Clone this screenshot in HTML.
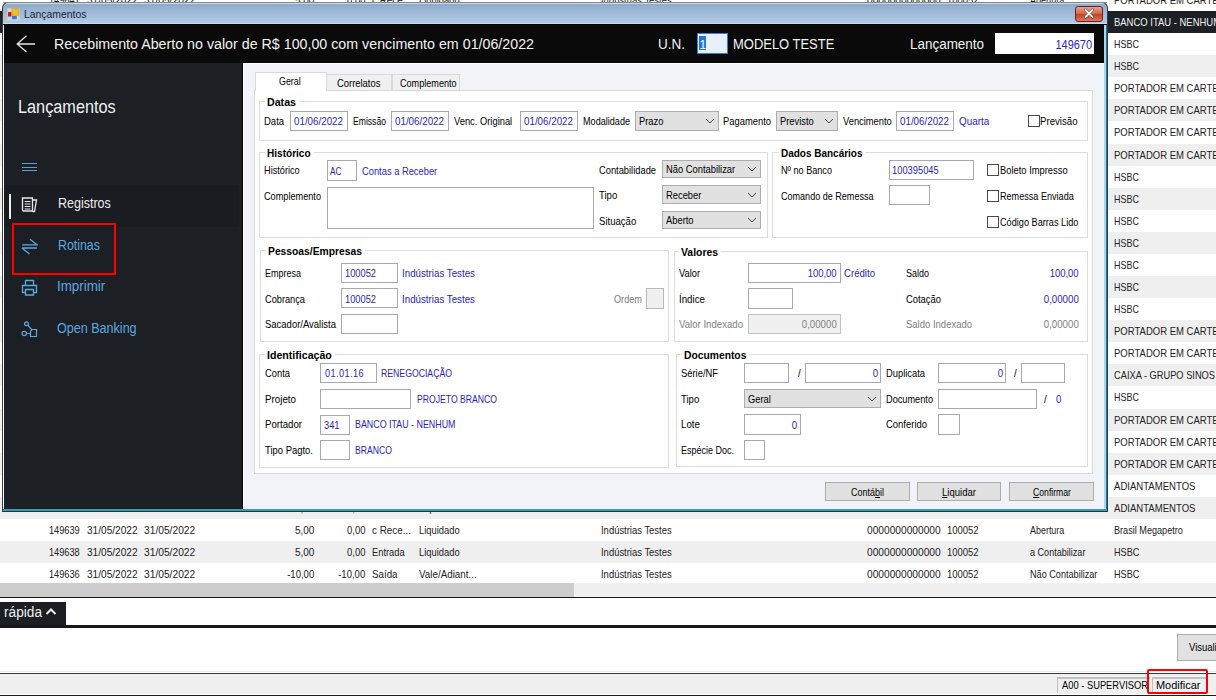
<!DOCTYPE html>
<html><head><meta charset="utf-8">
<style>
*{box-sizing:border-box}
body{margin:0;width:1216px;height:700px;position:relative;overflow:hidden;background:#fff;font-family:"Liberation Sans",sans-serif;font-size:11px;color:#000}
.a{position:absolute}
.t{position:absolute;white-space:nowrap}
u{text-decoration:underline}
</style></head><body>
<div class="a" style="left:0px;top:0px;width:1216px;height:700px;background:#fff;"></div>
<div class="a" style="left:0px;top:11px;width:1216px;height:22px;background:#1d2024;"></div>
<div class="a" style="left:0px;top:55px;width:1216px;height:22px;background:#efefef;"></div>
<div class="a" style="left:0px;top:99px;width:1216px;height:22px;background:#efefef;"></div>
<div class="a" style="left:0px;top:144px;width:1216px;height:22px;background:#efefef;"></div>
<div class="a" style="left:0px;top:188px;width:1216px;height:22px;background:#efefef;"></div>
<div class="a" style="left:0px;top:232px;width:1216px;height:22px;background:#efefef;"></div>
<div class="a" style="left:0px;top:276px;width:1216px;height:22px;background:#efefef;"></div>
<div class="a" style="left:0px;top:320px;width:1216px;height:22px;background:#efefef;"></div>
<div class="a" style="left:0px;top:364px;width:1216px;height:22px;background:#efefef;"></div>
<div class="a" style="left:0px;top:409px;width:1216px;height:22px;background:#efefef;"></div>
<div class="a" style="left:0px;top:453px;width:1216px;height:22px;background:#efefef;"></div>
<div class="a" style="left:0px;top:497px;width:1216px;height:22px;background:#efefef;"></div>
<div class="a" style="left:0px;top:541px;width:1216px;height:22px;background:#efefef;"></div>
<div class="t" style="transform:scaleX(0.865);top:-5.30px;font-size:11px;line-height:11px;color:#222;left:1113.8px;transform-origin:left center;">PORTADOR EM CARTEIRA</div>
<div class="t" style="transform:scaleX(0.86);top:16.70px;font-size:11px;line-height:11px;color:#f4f4f4;left:1113.8px;transform-origin:left center;">BANCO ITAU - NENHUM</div>
<div class="t" style="transform:scaleX(0.815);top:38.70px;font-size:11px;line-height:11px;color:#222;left:1113.8px;transform-origin:left center;">HSBC</div>
<div class="t" style="transform:scaleX(0.815);top:60.70px;font-size:11px;line-height:11px;color:#222;left:1113.8px;transform-origin:left center;">HSBC</div>
<div class="t" style="transform:scaleX(0.865);top:82.70px;font-size:11px;line-height:11px;color:#222;left:1113.8px;transform-origin:left center;">PORTADOR EM CARTEIRA</div>
<div class="t" style="transform:scaleX(0.865);top:104.70px;font-size:11px;line-height:11px;color:#222;left:1113.8px;transform-origin:left center;">PORTADOR EM CARTEIRA</div>
<div class="t" style="transform:scaleX(0.865);top:126.70px;font-size:11px;line-height:11px;color:#222;left:1113.8px;transform-origin:left center;">PORTADOR EM CARTEIRA</div>
<div class="t" style="transform:scaleX(0.865);top:149.70px;font-size:11px;line-height:11px;color:#222;left:1113.8px;transform-origin:left center;">PORTADOR EM CARTEIRA</div>
<div class="t" style="transform:scaleX(0.815);top:171.70px;font-size:11px;line-height:11px;color:#222;left:1113.8px;transform-origin:left center;">HSBC</div>
<div class="t" style="transform:scaleX(0.815);top:193.70px;font-size:11px;line-height:11px;color:#222;left:1113.8px;transform-origin:left center;">HSBC</div>
<div class="t" style="transform:scaleX(0.815);top:215.70px;font-size:11px;line-height:11px;color:#222;left:1113.8px;transform-origin:left center;">HSBC</div>
<div class="t" style="transform:scaleX(0.815);top:237.70px;font-size:11px;line-height:11px;color:#222;left:1113.8px;transform-origin:left center;">HSBC</div>
<div class="t" style="transform:scaleX(0.815);top:259.70px;font-size:11px;line-height:11px;color:#222;left:1113.8px;transform-origin:left center;">HSBC</div>
<div class="t" style="transform:scaleX(0.815);top:281.70px;font-size:11px;line-height:11px;color:#222;left:1113.8px;transform-origin:left center;">HSBC</div>
<div class="t" style="transform:scaleX(0.815);top:303.70px;font-size:11px;line-height:11px;color:#222;left:1113.8px;transform-origin:left center;">HSBC</div>
<div class="t" style="transform:scaleX(0.865);top:325.70px;font-size:11px;line-height:11px;color:#222;left:1113.8px;transform-origin:left center;">PORTADOR EM CARTEIRA</div>
<div class="t" style="transform:scaleX(0.865);top:347.70px;font-size:11px;line-height:11px;color:#222;left:1113.8px;transform-origin:left center;">PORTADOR EM CARTEIRA</div>
<div class="t" style="transform:scaleX(0.843);top:369.70px;font-size:11px;line-height:11px;color:#222;left:1113.8px;transform-origin:left center;">CAIXA - GRUPO SINOS</div>
<div class="t" style="transform:scaleX(0.815);top:391.70px;font-size:11px;line-height:11px;color:#222;left:1113.8px;transform-origin:left center;">HSBC</div>
<div class="t" style="transform:scaleX(0.865);top:414.70px;font-size:11px;line-height:11px;color:#222;left:1113.8px;transform-origin:left center;">PORTADOR EM CARTEIRA</div>
<div class="t" style="transform:scaleX(0.865);top:436.70px;font-size:11px;line-height:11px;color:#222;left:1113.8px;transform-origin:left center;">PORTADOR EM CARTEIRA</div>
<div class="t" style="transform:scaleX(0.865);top:458.70px;font-size:11px;line-height:11px;color:#222;left:1113.8px;transform-origin:left center;">PORTADOR EM CARTEIRA</div>
<div class="t" style="transform:scaleX(0.869);top:480.70px;font-size:11px;line-height:11px;color:#222;left:1113.8px;transform-origin:left center;">ADIANTAMENTOS</div>
<div class="t" style="transform:scaleX(0.869);top:502.70px;font-size:11px;line-height:11px;color:#222;left:1113.8px;transform-origin:left center;">ADIANTAMENTOS</div>
<div class="t" style="transform:scaleX(0.8388);top:524.90px;font-size:11px;line-height:11px;color:#222;right:1136px;transform-origin:right center;">149639</div>
<div class="t" style="transform:scaleX(0.9190);top:524.90px;font-size:11px;line-height:11px;color:#222;left:86.5px;transform-origin:left center;">31/05/2022</div>
<div class="t" style="transform:scaleX(0.9299);top:524.90px;font-size:11px;line-height:11px;color:#222;left:143.6px;transform-origin:left center;">31/05/2022</div>
<div class="t" style="transform:scaleX(0.9056);top:524.90px;font-size:11px;line-height:11px;color:#222;right:901.7px;transform-origin:right center;">5,00</div>
<div class="t" style="transform:scaleX(0.8589);top:524.90px;font-size:11px;line-height:11px;color:#222;right:850.4px;transform-origin:right center;">0,00</div>
<div class="t" style="transform:scaleX(0.8962);top:524.90px;font-size:11px;line-height:11px;color:#222;left:371.8px;transform-origin:left center;">c Rece...</div>
<div class="t" style="transform:scaleX(0.8529);top:524.90px;font-size:11px;line-height:11px;color:#222;left:418.5px;transform-origin:left center;">Liquidado</div>
<div class="t" style="transform:scaleX(0.8586);top:524.90px;font-size:11px;line-height:11px;color:#222;left:600.6px;transform-origin:left center;">Indústrias Testes</div>
<div class="t" style="transform:scaleX(0.9267);top:524.90px;font-size:11px;line-height:11px;color:#222;left:866.6px;transform-origin:left center;">0000000000000</div>
<div class="t" style="transform:scaleX(0.8606);top:524.90px;font-size:11px;line-height:11px;color:#222;left:947.2px;transform-origin:left center;">100052</div>
<div class="t" style="transform:scaleX(0.8127);top:524.90px;font-size:11px;line-height:11px;color:#222;left:1030px;transform-origin:left center;">Abertura</div>
<div class="t" style="transform:scaleX(0.8286);top:524.90px;font-size:11px;line-height:11px;color:#222;left:1113.7px;transform-origin:left center;">Brasil Megapetro</div>
<div class="t" style="transform:scaleX(0.8388);top:546.90px;font-size:11px;line-height:11px;color:#222;right:1136px;transform-origin:right center;">149638</div>
<div class="t" style="transform:scaleX(0.9190);top:546.90px;font-size:11px;line-height:11px;color:#222;left:86.5px;transform-origin:left center;">31/05/2022</div>
<div class="t" style="transform:scaleX(0.9299);top:546.90px;font-size:11px;line-height:11px;color:#222;left:143.6px;transform-origin:left center;">31/05/2022</div>
<div class="t" style="transform:scaleX(0.9056);top:546.90px;font-size:11px;line-height:11px;color:#222;right:901.7px;transform-origin:right center;">5,00</div>
<div class="t" style="transform:scaleX(0.8589);top:546.90px;font-size:11px;line-height:11px;color:#222;right:850.4px;transform-origin:right center;">0,00</div>
<div class="t" style="transform:scaleX(0.8461);top:546.90px;font-size:11px;line-height:11px;color:#222;left:371.8px;transform-origin:left center;">Entrada</div>
<div class="t" style="transform:scaleX(0.8529);top:546.90px;font-size:11px;line-height:11px;color:#222;left:418.5px;transform-origin:left center;">Liquidado</div>
<div class="t" style="transform:scaleX(0.8586);top:546.90px;font-size:11px;line-height:11px;color:#222;left:600.6px;transform-origin:left center;">Indústrias Testes</div>
<div class="t" style="transform:scaleX(0.9267);top:546.90px;font-size:11px;line-height:11px;color:#222;left:866.6px;transform-origin:left center;">0000000000000</div>
<div class="t" style="transform:scaleX(0.8606);top:546.90px;font-size:11px;line-height:11px;color:#222;left:947.2px;transform-origin:left center;">100052</div>
<div class="t" style="transform:scaleX(0.8236);top:546.90px;font-size:11px;line-height:11px;color:#222;left:1030px;transform-origin:left center;">a Contabilizar</div>
<div class="t" style="transform:scaleX(0.8278);top:546.90px;font-size:11px;line-height:11px;color:#222;left:1113.7px;transform-origin:left center;">HSBC</div>
<div class="t" style="transform:scaleX(0.8388);top:568.90px;font-size:11px;line-height:11px;color:#222;right:1136px;transform-origin:right center;">149636</div>
<div class="t" style="transform:scaleX(0.9190);top:568.90px;font-size:11px;line-height:11px;color:#222;left:86.5px;transform-origin:left center;">31/05/2022</div>
<div class="t" style="transform:scaleX(0.9299);top:568.90px;font-size:11px;line-height:11px;color:#222;left:143.6px;transform-origin:left center;">31/05/2022</div>
<div class="t" style="transform:scaleX(0.8653);top:568.90px;font-size:11px;line-height:11px;color:#222;right:901.7px;transform-origin:right center;">-10,00</div>
<div class="t" style="transform:scaleX(0.8653);top:568.90px;font-size:11px;line-height:11px;color:#222;right:850.4px;transform-origin:right center;">-10,00</div>
<div class="t" style="transform:scaleX(0.8870);top:568.90px;font-size:11px;line-height:11px;color:#222;left:371.8px;transform-origin:left center;">Saída</div>
<div class="t" style="transform:scaleX(0.8928);top:568.90px;font-size:11px;line-height:11px;color:#222;left:418.5px;transform-origin:left center;">Vale/Adiant...</div>
<div class="t" style="transform:scaleX(0.8586);top:568.90px;font-size:11px;line-height:11px;color:#222;left:600.6px;transform-origin:left center;">Indústrias Testes</div>
<div class="t" style="transform:scaleX(0.9267);top:568.90px;font-size:11px;line-height:11px;color:#222;left:866.6px;transform-origin:left center;">0000000000000</div>
<div class="t" style="transform:scaleX(0.8606);top:568.90px;font-size:11px;line-height:11px;color:#222;left:947.2px;transform-origin:left center;">100052</div>
<div class="t" style="transform:scaleX(0.8287);top:568.90px;font-size:11px;line-height:11px;color:#222;left:1030px;transform-origin:left center;">Não Contabilizar</div>
<div class="t" style="transform:scaleX(0.8278);top:568.90px;font-size:11px;line-height:11px;color:#222;left:1113.7px;transform-origin:left center;">HSBC</div>
<div class="t" style="transform:scaleX(0.8388);top:502.90px;font-size:11px;line-height:11px;color:#222;right:1136px;transform-origin:right center;">149640</div>
<div class="t" style="transform:scaleX(0.9190);top:502.90px;font-size:11px;line-height:11px;color:#222;left:86.5px;transform-origin:left center;">31/05/2022</div>
<div class="t" style="transform:scaleX(0.9299);top:502.90px;font-size:11px;line-height:11px;color:#222;left:143.6px;transform-origin:left center;">31/05/2022</div>
<div class="t" style="transform:scaleX(0.9056);top:502.90px;font-size:11px;line-height:11px;color:#222;right:901.7px;transform-origin:right center;">5,00</div>
<div class="t" style="transform:scaleX(0.8589);top:502.90px;font-size:11px;line-height:11px;color:#222;right:850.4px;transform-origin:right center;">0,00</div>
<div class="t" style="transform:scaleX(0.8962);top:502.90px;font-size:11px;line-height:11px;color:#222;left:371.8px;transform-origin:left center;">c Rece...</div>
<div class="t" style="transform:scaleX(0.8529);top:502.90px;font-size:11px;line-height:11px;color:#222;left:418.5px;transform-origin:left center;">Liquidado</div>
<div class="t" style="transform:scaleX(0.8586);top:502.90px;font-size:11px;line-height:11px;color:#222;left:600.6px;transform-origin:left center;">Indústrias Testes</div>
<div class="t" style="transform:scaleX(0.9267);top:502.90px;font-size:11px;line-height:11px;color:#222;left:866.6px;transform-origin:left center;">0000000000000</div>
<div class="t" style="transform:scaleX(0.8606);top:502.90px;font-size:11px;line-height:11px;color:#222;left:947.2px;transform-origin:left center;">100052</div>
<div class="t" style="transform:scaleX(0.8127);top:502.90px;font-size:11px;line-height:11px;color:#222;left:1030px;transform-origin:left center;">Abertura</div>
<div class="t" style="transform:scaleX(0.8388);top:-5.10px;font-size:11px;line-height:11px;color:#222;right:1136px;transform-origin:right center;">149641</div>
<div class="t" style="transform:scaleX(0.9190);top:-5.10px;font-size:11px;line-height:11px;color:#222;left:86.5px;transform-origin:left center;">31/05/2022</div>
<div class="t" style="transform:scaleX(0.9299);top:-5.10px;font-size:11px;line-height:11px;color:#222;left:143.6px;transform-origin:left center;">31/05/2022</div>
<div class="t" style="transform:scaleX(0.9056);top:-5.10px;font-size:11px;line-height:11px;color:#222;right:901.7px;transform-origin:right center;">5,00</div>
<div class="t" style="transform:scaleX(0.8589);top:-5.10px;font-size:11px;line-height:11px;color:#222;right:850.4px;transform-origin:right center;">0,00</div>
<div class="t" style="transform:scaleX(0.8962);top:-5.10px;font-size:11px;line-height:11px;color:#222;left:371.8px;transform-origin:left center;">c Rece...</div>
<div class="t" style="transform:scaleX(0.8529);top:-5.10px;font-size:11px;line-height:11px;color:#222;left:418.5px;transform-origin:left center;">Liquidado</div>
<div class="t" style="transform:scaleX(0.8586);top:-5.10px;font-size:11px;line-height:11px;color:#222;left:600.6px;transform-origin:left center;">Indústrias Testes</div>
<div class="t" style="transform:scaleX(0.9267);top:-5.10px;font-size:11px;line-height:11px;color:#222;left:866.6px;transform-origin:left center;">0000000000000</div>
<div class="t" style="transform:scaleX(0.8606);top:-5.10px;font-size:11px;line-height:11px;color:#222;left:947.2px;transform-origin:left center;">100052</div>
<div class="t" style="transform:scaleX(0.8127);top:-5.10px;font-size:11px;line-height:11px;color:#222;left:1030px;transform-origin:left center;">Abertura</div>
<div class="a" style="left:0px;top:583px;width:1216px;height:14px;background:#f0f0f0;"></div>
<div class="a" style="left:0px;top:583px;width:574px;height:14px;background:#cdcdcd;"></div>
<div class="a" style="left:0px;top:597px;width:1216px;height:1px;background:#1a1a1a;"></div>
<div class="a" style="left:0px;top:598px;width:1216px;height:28px;background:#fff;"></div>
<div class="a" style="left:0px;top:602px;width:66px;height:24px;background:#1b1e22;"></div>
<div class="t" style="transform:scaleX(0.9763);top:604.70px;font-size:14px;line-height:14px;color:#f0f0f0;left:4px;transform-origin:left center;">rápida</div>
<svg class="a" style="left:45px;top:607px" width="12" height="9" viewBox="0 0 12 9"><path d="M1.5 7 L6 2.5 L10.5 7" stroke="#f0f0f0" stroke-width="2" fill="none"/></svg>
<div class="a" style="left:0px;top:625px;width:1216px;height:3px;background:#15171a;"></div>
<div class="a" style="left:0px;top:628px;width:1216px;height:43px;background:#fff;"></div>
<div class="a" style="left:1177px;top:634px;width:53px;height:27px;background:#e1e1e1;border:1px solid #adadad;"></div>
<div class="t" style="top:642.00px;font-size:11px;line-height:11px;color:#000;transform:scaleX(0.86);left:1189px;transform-origin:left center;">Visualizar</div>
<div class="a" style="left:0px;top:671px;width:1216px;height:1px;background:#e0ecf8;"></div>
<div class="a" style="left:0px;top:673px;width:1216px;height:1px;background:#3a3a3a;"></div>
<div class="a" style="left:0px;top:674px;width:1216px;height:20px;background:#f0f0f0;"></div>
<div class="a" style="left:0px;top:694px;width:1216px;height:1px;background:#fff;"></div>
<div class="a" style="left:0px;top:695px;width:1216px;height:1px;background:#1e1e1e;"></div>
<div class="a" style="left:0px;top:696px;width:1216px;height:4px;background:#fff;"></div>
<div class="a" style="left:1057px;top:677px;width:93px;height:16px;border:1px solid #c0c0c0;border-right:none;border-bottom:none;border-width:2px 0 0 1px;"></div>
<div class="t" style="transform:scaleX(0.8491);top:680.00px;font-size:11px;line-height:11px;color:#000;left:1061.5px;transform-origin:left center;">A00 - SUPERVISOR</div>
<div class="a" style="left:1152px;top:677px;width:54px;height:16px;border:1px solid #c0c0c0;border-bottom:none;border-width:2px 0 0 1px;"></div>
<div class="t" style="transform:scaleX(0.9950);top:680.00px;font-size:11px;line-height:11px;color:#000;left:1155.6px;transform-origin:left center;">Modificar</div>
<div class="a" style="left:1147px;top:669px;width:61px;height:25px;border:2.5px solid #f00;border-radius:2px;"></div>
<div class="a" style="left:2px;top:2px;width:1106px;height:510px;background:#3a3a3a;border-radius:6px 6px 0 0"></div>
<div class="a" style="left:3px;top:2px;width:1104px;height:1px;background:#8a8480;border-radius:5px 5px 0 0"></div>
<div class="a" style="left:3px;top:3px;width:1104px;height:508px;background:linear-gradient(#c8dcf0 0px,#c8dcf0 1px,#8eaacb 1px,#b2cce6 20px,#c4dcf4 20px,#c4dcf4 21px,#000 21px);border-radius:5px 5px 0 0"></div>
<div class="a" style="left:3px;top:25px;width:1px;height:484px;background:#f4f8fc;"></div>
<div class="a" style="left:1104px;top:25px;width:2px;height:484px;background:#a8d8f0;"></div>
<div class="a" style="left:1106px;top:25px;width:1px;height:484px;background:#1a7a90;"></div>
<svg class="a" style="left:7px;top:8px" width="13" height="13" viewBox="0 0 13 13"><rect x="0.5" y="0.5" width="12" height="12" fill="#c8d8ea" stroke="#d8c8b0" stroke-width="0.6"/><rect x="1" y="4" width="3.5" height="4.5" fill="#c8201a"/><rect x="5" y="0.8" width="6.8" height="6.4" fill="#f0c020" stroke="#c89810" stroke-width="0.6"/><rect x="5" y="8" width="4.8" height="3.2" fill="#3a7ad8"/></svg>
<div class="t" style="transform:scaleX(0.9463);top:9.40px;font-size:11px;line-height:11px;color:#1e1e3a;left:24px;transform-origin:left center;">Lançamentos</div>
<div class="a" style="left:1075px;top:6px;width:28px;height:16px;border:1px solid #5a2a2a;border-radius:3px;background:linear-gradient(#e8a090,#d86a50 45%,#c8401e 55%,#e07860)"></div>
<svg class="a" style="left:1083px;top:8px" width="12" height="11" viewBox="0 0 12 11"><path d="M2.5 2 L9.5 9 M9.5 2 L2.5 9" stroke="#6a3a3a" stroke-width="3" stroke-linecap="round"/><path d="M2.5 2 L9.5 9 M9.5 2 L2.5 9" stroke="#fff" stroke-width="1.8" stroke-linecap="round"/></svg>
<div class="a" style="left:4px;top:24px;width:1100px;height:1px;background:#000;"></div>
<div class="a" style="left:4px;top:25px;width:1100px;height:38px;background:#0a0a0a;"></div>
<svg class="a" style="left:15px;top:34px" width="24" height="20" viewBox="0 0 24 20"><path d="M2.2 10 L20 10 M11.5 1.8 L2.2 10 L11.5 18" stroke="#e6e6e6" stroke-width="1.3" fill="none"/></svg>
<div class="t" style="transform:scaleX(0.9193);top:36.20px;font-size:15.5px;line-height:15.5px;color:#f2f2f2;left:54px;transform-origin:left center;">Recebimento Aberto no valor de R$ 100,00 com vencimento em 01/06/2022</div>
<div class="t" style="transform:scaleX(0.8710);top:36.20px;font-size:15.5px;line-height:15.5px;color:#f2f2f2;left:658px;transform-origin:left center;">U.N.</div>
<div class="a" style="left:697px;top:33px;width:31px;height:21px;background:#e8f1fb;border:1px solid #3d7bd0;"></div>
<div class="a" style="left:699px;top:36px;width:6.5px;height:14px;background:#1a78e0;"></div>
<div class="t" style="top:38.50px;font-size:12px;line-height:12px;color:#fff;left:699.5px;transform-origin:left center;">1</div>
<div class="t" style="transform:scaleX(0.8361);top:36.20px;font-size:15.5px;line-height:15.5px;color:#f2f2f2;left:733.2px;transform-origin:left center;">MODELO TESTE</div>
<div class="t" style="transform:scaleX(0.8674);top:36.20px;font-size:15.5px;line-height:15.5px;color:#f2f2f2;left:909.5px;transform-origin:left center;">Lançamento</div>
<div class="a" style="left:995px;top:33px;width:99px;height:21px;background:#fff;"></div>
<div class="t" style="transform:scaleX(0.9139);top:38.50px;font-size:12px;line-height:12px;color:#2a24c8;right:123.5px;transform-origin:right center;">149670</div>
<div class="a" style="left:4px;top:63px;width:239px;height:446px;background:#1c1f23;"></div>
<div class="a" style="left:242px;top:63px;width:1px;height:446px;background:#050505;"></div>
<div class="t" style="transform:scaleX(0.9040);top:98.10px;font-size:18px;line-height:18px;color:#f0f0f0;left:18.3px;transform-origin:left center;">Lançamentos</div>
<div class="a" style="left:22px;top:163px;width:15px;height:1.1999999999999886px;background:#5c9fd6;"></div>
<div class="a" style="left:22px;top:166.5px;width:15px;height:1.1999999999999886px;background:#5c9fd6;"></div>
<div class="a" style="left:22px;top:170px;width:15px;height:1.1999999999999886px;background:#5c9fd6;"></div>
<div class="a" style="left:4px;top:185px;width:235px;height:42px;background:#191c20;"></div>
<div class="a" style="left:9px;top:194px;width:1.5px;height:24.5px;background:#f0f0f0;"></div>
<svg class="a" style="left:21px;top:196px" width="17" height="17" viewBox="0 0 17 17"><path d="M1.5 2 H11.5 V15 H2.5 Q1.5 15 1.5 14 Z" stroke="#e8e8e8" stroke-width="1.3" fill="none"/><path d="M11.5 4 H15.5 L13.5 15.5 H11.5" stroke="#e8e8e8" stroke-width="1.3" fill="none"/><path d="M3.7 5.5 H9.5 M3.7 8 H9.5 M3.7 10.5 H9.5 M3.7 13 H9.5" stroke="#e8e8e8" stroke-width="1.1"/></svg>
<div class="t" style="transform:scaleX(0.8928);top:195.90px;font-size:14px;line-height:14px;color:#ececec;left:57.6px;transform-origin:left center;">Registros</div>
<svg class="a" style="left:21px;top:237px" width="17" height="18" viewBox="0 0 17 18"><path d="M1.2 7.8 H16 L9 2.2 M1 11 H16 M1 11 L8.5 17" stroke="#5ea8e0" stroke-width="1.3" fill="none" stroke-linejoin="miter"/></svg>
<div class="t" style="transform:scaleX(0.8806);top:238.00px;font-size:14px;line-height:14px;color:#5ea8e0;left:57.6px;transform-origin:left center;">Rotinas</div>
<svg class="a" style="left:21px;top:279px" width="17" height="18" viewBox="0 0 17 18"><path d="M4.5 6 V1.5 H12.5 V6 M4 13.5 H1.5 V6.5 H15.5 V13.5 H13 M4.5 10.5 H12.5 V16 H4.5 Z" stroke="#5ea8e0" stroke-width="1.3" fill="none"/></svg>
<div class="t" style="transform:scaleX(0.9555);top:278.90px;font-size:14px;line-height:14px;color:#5ea8e0;left:57.3px;transform-origin:left center;">Imprimir</div>
<svg class="a" style="left:21px;top:321px" width="17" height="17" viewBox="0 0 17 17"><circle cx="5.5" cy="2.8" r="1.9" stroke="#5ea8e0" stroke-width="1.2" fill="none"/><circle cx="3.2" cy="12.5" r="2.2" stroke="#5ea8e0" stroke-width="1.2" fill="none"/><path d="M6.8 4.2 L11 9 M5.4 12.5 H9.5 M9.5 15.5 V10.5 L11 8.5 H15.5 V15.5 Z" stroke="#5ea8e0" stroke-width="1.2" fill="none"/></svg>
<div class="t" style="transform:scaleX(0.8971);top:320.80px;font-size:14px;line-height:14px;color:#5ea8e0;left:57.3px;transform-origin:left center;">Open Banking</div>
<div class="a" style="left:12px;top:223px;width:104px;height:52px;border:2px solid #f00;"></div>
<div class="a" style="left:243px;top:63px;width:861px;height:446px;background:#f2f3f9;"></div>
<div class="a" style="left:243px;top:63px;width:861px;height:1px;background:#fff;"></div>
<div class="a" style="left:243px;top:63px;width:1px;height:446px;background:#fff;"></div>
<div class="a" style="left:254px;top:90px;width:839px;height:384px;background:#fff;border:1px solid #d9d9d9;"></div>
<div class="a" style="left:326px;top:74px;width:66px;height:17px;background:#f0f0f0;border:1px solid #d9d9d9;"></div>
<div class="a" style="left:392px;top:74px;width:68px;height:17px;background:#f0f0f0;border:1px solid #d9d9d9;"></div>
<div class="a" style="left:255px;top:72px;width:72px;height:19px;background:#fff;border:1px solid #d9d9d9;border-bottom:none;"></div>
<div class="a" style="left:256px;top:90px;width:70px;height:2px;background:#fff;"></div>
<div class="t" style="transform:scaleX(0.8065);top:75.70px;font-size:11px;line-height:11px;color:#000;left:278.5px;transform-origin:left center;">Geral</div>
<div class="t" style="transform:scaleX(0.8552);top:77.60px;font-size:11px;line-height:11px;color:#000;left:336.7px;transform-origin:left center;">Correlatos</div>
<div class="t" style="transform:scaleX(0.8265);top:77.60px;font-size:11px;line-height:11px;color:#000;left:400px;transform-origin:left center;">Complemento</div>
<div class="a" style="left:259px;top:101px;width:829px;height:40px;border:1px solid #dcdcdc;"></div>
<div class="a" style="left:265.1px;top:99px;width:34.0px;height:5px;background:#fff;"></div>
<div class="t" style="transform:scaleX(0.9677);top:96.50px;font-size:11px;line-height:11px;color:#000;font-weight:bold;left:267.1px;transform-origin:left center;">Datas</div>
<div class="t" style="transform:scaleX(0.8645);top:115.60px;font-size:11px;line-height:11px;color:#000;left:263.8px;transform-origin:left center;">Data</div>
<div class="a" style="left:290px;top:111px;width:58px;height:20px;background:#fff;border:1px solid #a8a8b0;"></div>
<div class="t" style="transform:scaleX(0.8899);top:115.80px;font-size:11px;line-height:11px;color:#2a1fc0;left:294.3px;transform-origin:left center;">01/06/2022</div>
<div class="t" style="transform:scaleX(0.7822);top:115.60px;font-size:11px;line-height:11px;color:#000;left:352.6px;transform-origin:left center;">Emissão</div>
<div class="a" style="left:391px;top:111px;width:58px;height:20px;background:#fff;border:1px solid #a8a8b0;"></div>
<div class="t" style="transform:scaleX(0.8899);top:115.80px;font-size:11px;line-height:11px;color:#2a1fc0;left:395.3px;transform-origin:left center;">01/06/2022</div>
<div class="t" style="transform:scaleX(0.8498);top:115.60px;font-size:11px;line-height:11px;color:#000;left:454px;transform-origin:left center;">Venc. Original</div>
<div class="a" style="left:520px;top:111px;width:58px;height:20px;background:#fff;border:1px solid #a8a8b0;"></div>
<div class="t" style="transform:scaleX(0.8899);top:115.80px;font-size:11px;line-height:11px;color:#2a1fc0;left:524.3px;transform-origin:left center;">01/06/2022</div>
<div class="t" style="transform:scaleX(0.8264);top:115.60px;font-size:11px;line-height:11px;color:#000;left:582.9px;transform-origin:left center;">Modalidade</div>
<div class="a" style="left:635px;top:111px;width:84px;height:20px;background:#e1e1e1;border:1px solid #adadad;"></div>
<div class="t" style="transform:scaleX(0.85);top:116.00px;font-size:11px;line-height:11px;color:#000;left:639px;transform-origin:left center;">Prazo</div>
<svg class="a" style="left:705px;top:118.0px" width="10" height="6" viewBox="0 0 10 6"><path d="M1 1 L5 5 L9 1" stroke="#444" stroke-width="1" fill="none"/></svg>
<div class="t" style="transform:scaleX(0.8531);top:115.60px;font-size:11px;line-height:11px;color:#000;left:723.3px;transform-origin:left center;">Pagamento</div>
<div class="a" style="left:776px;top:111px;width:62px;height:20px;background:#e1e1e1;border:1px solid #adadad;"></div>
<div class="t" style="transform:scaleX(0.85);top:116.00px;font-size:11px;line-height:11px;color:#000;left:780px;transform-origin:left center;">Previsto</div>
<svg class="a" style="left:824px;top:118.0px" width="10" height="6" viewBox="0 0 10 6"><path d="M1 1 L5 5 L9 1" stroke="#444" stroke-width="1" fill="none"/></svg>
<div class="t" style="transform:scaleX(0.8489);top:115.60px;font-size:11px;line-height:11px;color:#000;left:842.6px;transform-origin:left center;">Vencimento</div>
<div class="a" style="left:896px;top:111px;width:58px;height:20px;background:#fff;border:1px solid #a8a8b0;"></div>
<div class="t" style="transform:scaleX(0.8899);top:115.80px;font-size:11px;line-height:11px;color:#2a1fc0;left:900.3px;transform-origin:left center;">01/06/2022</div>
<div class="t" style="transform:scaleX(0.9007);top:115.60px;font-size:11px;line-height:11px;color:#2a1fc0;left:959px;transform-origin:left center;">Quarta</div>
<div class="a" style="left:1028px;top:115px;width:12px;height:12px;background:#fff;border:1px solid #4a4a4a;"></div>
<div class="t" style="transform:scaleX(0.8762);top:115.60px;font-size:11px;line-height:11px;color:#000;left:1040px;transform-origin:left center;">Previsão</div>
<div class="a" style="left:259px;top:152px;width:509px;height:86px;border:1px solid #dcdcdc;"></div>
<div class="a" style="left:265.3px;top:150px;width:48.60000000000002px;height:5px;background:#fff;"></div>
<div class="t" style="transform:scaleX(0.9143);top:147.50px;font-size:11px;line-height:11px;color:#000;font-weight:bold;left:267.3px;transform-origin:left center;">Histórico</div>
<div class="t" style="transform:scaleX(0.8342);top:165.40px;font-size:11px;line-height:11px;color:#000;left:264px;transform-origin:left center;">Histórico</div>
<div class="a" style="left:327px;top:160px;width:30px;height:21px;background:#fff;border:1px solid #a8a8b0;"></div>
<div class="t" style="transform:scaleX(0.7526);top:165.80px;font-size:11px;line-height:11px;color:#2a1fc0;left:329.8px;transform-origin:left center;">AC</div>
<div class="t" style="transform:scaleX(0.8481);top:165.60px;font-size:11px;line-height:11px;color:#2a1fc0;left:362px;transform-origin:left center;">Contas a Receber</div>
<div class="t" style="transform:scaleX(0.8323);top:191.20px;font-size:11px;line-height:11px;color:#000;left:264px;transform-origin:left center;">Complemento</div>
<div class="a" style="left:327px;top:187px;width:267px;height:42px;background:#fff;border:1px solid #a8a8b0;"></div>
<div class="t" style="transform:scaleX(0.8472);top:164.70px;font-size:11px;line-height:11px;color:#000;left:599.2px;transform-origin:left center;">Contabilidade</div>
<div class="a" style="left:662px;top:160px;width:99px;height:18px;background:#e1e1e1;border:1px solid #adadad;"></div>
<div class="t" style="transform:scaleX(0.85);top:164.00px;font-size:11px;line-height:11px;color:#000;left:666px;transform-origin:left center;">Não Contabilizar</div>
<svg class="a" style="left:747px;top:166.0px" width="10" height="6" viewBox="0 0 10 6"><path d="M1 1 L5 5 L9 1" stroke="#444" stroke-width="1" fill="none"/></svg>
<div class="t" style="transform:scaleX(0.87);top:189.90px;font-size:11px;line-height:11px;color:#000;left:599.2px;transform-origin:left center;">Tipo</div>
<div class="a" style="left:662px;top:185px;width:99px;height:19px;background:#e1e1e1;border:1px solid #adadad;"></div>
<div class="t" style="transform:scaleX(0.85);top:189.50px;font-size:11px;line-height:11px;color:#000;left:666px;transform-origin:left center;">Receber</div>
<svg class="a" style="left:747px;top:191.5px" width="10" height="6" viewBox="0 0 10 6"><path d="M1 1 L5 5 L9 1" stroke="#444" stroke-width="1" fill="none"/></svg>
<div class="t" style="transform:scaleX(0.87);top:215.70px;font-size:11px;line-height:11px;color:#000;left:599.2px;transform-origin:left center;">Situação</div>
<div class="a" style="left:662px;top:211px;width:99px;height:18px;background:#e1e1e1;border:1px solid #adadad;"></div>
<div class="t" style="transform:scaleX(0.85);top:215.00px;font-size:11px;line-height:11px;color:#000;left:666px;transform-origin:left center;">Aberto</div>
<svg class="a" style="left:747px;top:217.0px" width="10" height="6" viewBox="0 0 10 6"><path d="M1 1 L5 5 L9 1" stroke="#444" stroke-width="1" fill="none"/></svg>
<div class="a" style="left:772px;top:152px;width:316px;height:86px;border:1px solid #dcdcdc;"></div>
<div class="a" style="left:778.5px;top:150px;width:86.5px;height:5px;background:#fff;"></div>
<div class="t" style="transform:scaleX(0.9068);top:147.50px;font-size:11px;line-height:11px;color:#000;font-weight:bold;left:780.5px;transform-origin:left center;">Dados Bancários</div>
<div class="t" style="transform:scaleX(0.8293);top:165.00px;font-size:11px;line-height:11px;color:#000;left:780.5px;transform-origin:left center;">Nº no Banco</div>
<div class="a" style="left:889px;top:160px;width:85px;height:20px;background:#fff;border:1px solid #a8a8b0;"></div>
<div class="t" style="transform:scaleX(0.8481);top:165.20px;font-size:11px;line-height:11px;color:#2a1fc0;left:892px;transform-origin:left center;">100395045</div>
<div class="t" style="transform:scaleX(0.8221);top:190.70px;font-size:11px;line-height:11px;color:#000;left:780.5px;transform-origin:left center;">Comando de Remessa</div>
<div class="a" style="left:889px;top:185px;width:41px;height:20px;background:#fff;border:1px solid #a8a8b0;"></div>
<div class="a" style="left:987px;top:164px;width:12px;height:12px;background:#fff;border:1px solid #4a4a4a;"></div>
<div class="t" style="transform:scaleX(0.8505);top:165.20px;font-size:11px;line-height:11px;color:#000;left:1000px;transform-origin:left center;">Boleto Impresso</div>
<div class="a" style="left:987px;top:190px;width:12px;height:12px;background:#fff;border:1px solid #4a4a4a;"></div>
<div class="t" style="transform:scaleX(0.8266);top:190.90px;font-size:11px;line-height:11px;color:#000;left:1000px;transform-origin:left center;">Remessa Enviada</div>
<div class="a" style="left:987px;top:216px;width:12px;height:12px;background:#fff;border:1px solid #4a4a4a;"></div>
<div class="t" style="transform:scaleX(0.8325);top:216.60px;font-size:11px;line-height:11px;color:#000;left:1000px;transform-origin:left center;">Código Barras Lido</div>
<div class="a" style="left:260px;top:250px;width:409px;height:92px;border:1px solid #dcdcdc;"></div>
<div class="a" style="left:266.1px;top:248px;width:99.0px;height:5px;background:#fff;"></div>
<div class="t" style="transform:scaleX(0.9372);top:245.50px;font-size:11px;line-height:11px;color:#000;font-weight:bold;left:268.1px;transform-origin:left center;">Pessoas/Empresas</div>
<div class="t" style="transform:scaleX(0.8176);top:268.00px;font-size:11px;line-height:11px;color:#000;left:264.8px;transform-origin:left center;">Empresa</div>
<div class="a" style="left:341px;top:263px;width:57px;height:20px;background:#fff;border:1px solid #a8a8b0;"></div>
<div class="t" style="transform:scaleX(0.8443);top:268.20px;font-size:11px;line-height:11px;color:#2a1fc0;left:345px;transform-origin:left center;">100052</div>
<div class="t" style="transform:scaleX(0.8865);top:268.00px;font-size:11px;line-height:11px;color:#2a1fc0;left:401.7px;transform-origin:left center;">Indústrias Testes</div>
<div class="t" style="transform:scaleX(0.8385);top:293.70px;font-size:11px;line-height:11px;color:#000;left:264.8px;transform-origin:left center;">Cobrança</div>
<div class="a" style="left:341px;top:288px;width:57px;height:20px;background:#fff;border:1px solid #a8a8b0;"></div>
<div class="t" style="transform:scaleX(0.8443);top:293.90px;font-size:11px;line-height:11px;color:#2a1fc0;left:345px;transform-origin:left center;">100052</div>
<div class="t" style="transform:scaleX(0.8865);top:293.70px;font-size:11px;line-height:11px;color:#2a1fc0;left:401.7px;transform-origin:left center;">Indústrias Testes</div>
<div class="t" style="transform:scaleX(0.8621);top:319.00px;font-size:11px;line-height:11px;color:#000;left:264.8px;transform-origin:left center;">Sacador/Avalista</div>
<div class="a" style="left:341px;top:314px;width:57px;height:20px;background:#fff;border:1px solid #a8a8b0;"></div>
<div class="t" style="transform:scaleX(0.8327);top:294.00px;font-size:11px;line-height:11px;color:#808080;left:613.6px;transform-origin:left center;">Ordem</div>
<div class="a" style="left:646px;top:288px;width:18px;height:21px;background:#f0f0f0;border:1px solid #b8b8b8;"></div>
<div class="a" style="left:674px;top:251px;width:414px;height:91px;border:1px solid #dcdcdc;"></div>
<div class="a" style="left:679.4px;top:249px;width:42.0px;height:5px;background:#fff;"></div>
<div class="t" style="transform:scaleX(0.9453);top:246.50px;font-size:11px;line-height:11px;color:#000;font-weight:bold;left:681.4px;transform-origin:left center;">Valores</div>
<div class="t" style="transform:scaleX(0.8442);top:268.00px;font-size:11px;line-height:11px;color:#000;left:679.4px;transform-origin:left center;">Valor</div>
<div class="a" style="left:748px;top:263px;width:93px;height:20px;background:#fff;border:1px solid #a8a8b0;"></div>
<div class="t" style="transform:scaleX(0.8617);top:268.20px;font-size:11px;line-height:11px;color:#2a1fc0;right:379px;transform-origin:right center;">100,00</div>
<div class="t" style="transform:scaleX(0.8740);top:268.00px;font-size:11px;line-height:11px;color:#2a1fc0;left:844.3px;transform-origin:left center;">Crédito</div>
<div class="t" style="transform:scaleX(0.8173);top:268.10px;font-size:11px;line-height:11px;color:#000;left:906px;transform-origin:left center;">Saldo</div>
<div class="t" style="transform:scaleX(0.8617);top:268.10px;font-size:11px;line-height:11px;color:#2a1fc0;right:137px;transform-origin:right center;">100,00</div>
<div class="t" style="transform:scaleX(0.8856);top:294.00px;font-size:11px;line-height:11px;color:#000;left:679.4px;transform-origin:left center;">Índice</div>
<div class="a" style="left:748px;top:288px;width:45px;height:21px;background:#fff;border:1px solid #a8a8b0;"></div>
<div class="t" style="transform:scaleX(0.8540);top:293.80px;font-size:11px;line-height:11px;color:#000;left:906px;transform-origin:left center;">Cotação</div>
<div class="t" style="transform:scaleX(0.8802);top:293.80px;font-size:11px;line-height:11px;color:#2a1fc0;right:137px;transform-origin:right center;">0,00000</div>
<div class="t" style="transform:scaleX(0.8745);top:319.00px;font-size:11px;line-height:11px;color:#808080;left:679.4px;transform-origin:left center;">Valor Indexado</div>
<div class="a" style="left:748px;top:314px;width:93px;height:20px;background:#f0f0f0;border:1px solid #c4c4c4;"></div>
<div class="t" style="transform:scaleX(0.8802);top:319.20px;font-size:11px;line-height:11px;color:#808080;right:379px;transform-origin:right center;">0,00000</div>
<div class="t" style="transform:scaleX(0.8633);top:319.30px;font-size:11px;line-height:11px;color:#808080;left:906px;transform-origin:left center;">Saldo Indexado</div>
<div class="t" style="transform:scaleX(0.8802);top:319.30px;font-size:11px;line-height:11px;color:#808080;right:137px;transform-origin:right center;">0,00000</div>
<div class="a" style="left:259px;top:354px;width:410px;height:114px;border:1px solid #dcdcdc;"></div>
<div class="a" style="left:265.3px;top:352px;width:69.80000000000001px;height:5px;background:#fff;"></div>
<div class="t" style="transform:scaleX(0.9636);top:349.50px;font-size:11px;line-height:11px;color:#000;font-weight:bold;left:267.3px;transform-origin:left center;">Identificação</div>
<div class="t" style="transform:scaleX(0.8515);top:367.60px;font-size:11px;line-height:11px;color:#000;left:265px;transform-origin:left center;">Conta</div>
<div class="a" style="left:320px;top:363px;width:57px;height:20px;background:#fff;border:1px solid #a8a8b0;"></div>
<div class="t" style="transform:scaleX(0.8328);top:368.00px;font-size:11px;line-height:11px;color:#2a1fc0;letter-spacing:0.5px;left:324.5px;transform-origin:left center;">01.01.16</div>
<div class="t" style="transform:scaleX(0.7901);top:367.80px;font-size:11px;line-height:11px;color:#2a1fc0;left:381.4px;transform-origin:left center;">RENEGOCIAÇÃO</div>
<div class="t" style="transform:scaleX(0.8893);top:393.80px;font-size:11px;line-height:11px;color:#000;left:265px;transform-origin:left center;">Projeto</div>
<div class="a" style="left:320px;top:389px;width:91px;height:20px;background:#fff;border:1px solid #a8a8b0;"></div>
<div class="t" style="transform:scaleX(0.7853);top:393.60px;font-size:11px;line-height:11px;color:#2a1fc0;left:416.5px;transform-origin:left center;">PROJETO BRANCO</div>
<div class="t" style="transform:scaleX(0.8767);top:419.40px;font-size:11px;line-height:11px;color:#000;left:265px;transform-origin:left center;">Portador</div>
<div class="a" style="left:320px;top:415px;width:30px;height:20px;background:#fff;border:1px solid #a8a8b0;"></div>
<div class="t" style="transform:scaleX(0.8443);top:419.60px;font-size:11px;line-height:11px;color:#2a1fc0;left:323.5px;transform-origin:left center;">341</div>
<div class="t" style="transform:scaleX(0.8074);top:419.40px;font-size:11px;line-height:11px;color:#2a1fc0;left:354.8px;transform-origin:left center;">BANCO ITAU - NENHUM</div>
<div class="t" style="transform:scaleX(0.8593);top:445.00px;font-size:11px;line-height:11px;color:#000;left:265px;transform-origin:left center;">Tipo Pagto.</div>
<div class="a" style="left:320px;top:440px;width:30px;height:20px;background:#fff;border:1px solid #a8a8b0;"></div>
<div class="t" style="transform:scaleX(0.7862);top:445.00px;font-size:11px;line-height:11px;color:#2a1fc0;left:354.8px;transform-origin:left center;">BRANCO</div>
<div class="a" style="left:676px;top:354px;width:412px;height:113px;border:1px solid #dcdcdc;"></div>
<div class="a" style="left:681.6px;top:352px;width:67.39999999999998px;height:5px;background:#fff;"></div>
<div class="t" style="transform:scaleX(0.9366);top:349.50px;font-size:11px;line-height:11px;color:#000;font-weight:bold;left:683.6px;transform-origin:left center;">Documentos</div>
<div class="t" style="transform:scaleX(0.8524);top:368.00px;font-size:11px;line-height:11px;color:#000;left:681px;transform-origin:left center;">Série/NF</div>
<div class="a" style="left:744px;top:363px;width:45px;height:20px;background:#fff;border:1px solid #a8a8b0;"></div>
<div class="t" style="transform:scaleX(0.87);top:368.00px;font-size:11px;line-height:11px;color:#000;left:797.6px;transform-origin:left center;">/</div>
<div class="a" style="left:805px;top:363px;width:76px;height:20px;background:#fff;border:1px solid #a8a8b0;"></div>
<div class="t" style="transform:scaleX(0.87);top:368.20px;font-size:11px;line-height:11px;color:#2a1fc0;right:338px;transform-origin:right center;">0</div>
<div class="t" style="transform:scaleX(0.8504);top:368.00px;font-size:11px;line-height:11px;color:#000;left:885.6px;transform-origin:left center;">Duplicata</div>
<div class="a" style="left:938px;top:363px;width:68px;height:20px;background:#fff;border:1px solid #a8a8b0;"></div>
<div class="t" style="transform:scaleX(0.87);top:368.20px;font-size:11px;line-height:11px;color:#2a1fc0;right:213px;transform-origin:right center;">0</div>
<div class="t" style="transform:scaleX(0.87);top:368.00px;font-size:11px;line-height:11px;color:#000;left:1013.6px;transform-origin:left center;">/</div>
<div class="a" style="left:1021px;top:363px;width:44px;height:20px;background:#fff;border:1px solid #a8a8b0;"></div>
<div class="t" style="transform:scaleX(0.87);top:394.00px;font-size:11px;line-height:11px;color:#000;left:681px;transform-origin:left center;">Tipo</div>
<div class="a" style="left:744px;top:389px;width:137px;height:19px;background:#e1e1e1;border:1px solid #adadad;"></div>
<div class="t" style="transform:scaleX(0.85);top:393.50px;font-size:11px;line-height:11px;color:#000;left:748px;transform-origin:left center;">Geral</div>
<svg class="a" style="left:867px;top:395.5px" width="10" height="6" viewBox="0 0 10 6"><path d="M1 1 L5 5 L9 1" stroke="#444" stroke-width="1" fill="none"/></svg>
<div class="t" style="transform:scaleX(0.8353);top:394.00px;font-size:11px;line-height:11px;color:#000;left:885.6px;transform-origin:left center;">Documento</div>
<div class="a" style="left:938px;top:389px;width:99px;height:20px;background:#fff;border:1px solid #a8a8b0;"></div>
<div class="t" style="transform:scaleX(0.87);top:394.00px;font-size:11px;line-height:11px;color:#000;left:1044.4px;transform-origin:left center;">/</div>
<div class="t" style="transform:scaleX(0.87);top:394.00px;font-size:11px;line-height:11px;color:#2a1fc0;left:1056px;transform-origin:left center;">0</div>
<div class="t" style="transform:scaleX(0.8869);top:419.40px;font-size:11px;line-height:11px;color:#000;left:681px;transform-origin:left center;">Lote</div>
<div class="a" style="left:744px;top:414px;width:57px;height:21px;background:#fff;border:1px solid #a8a8b0;"></div>
<div class="t" style="transform:scaleX(0.87);top:419.60px;font-size:11px;line-height:11px;color:#2a1fc0;right:419px;transform-origin:right center;">0</div>
<div class="t" style="transform:scaleX(0.8595);top:419.40px;font-size:11px;line-height:11px;color:#000;left:885.6px;transform-origin:left center;">Conferido</div>
<div class="a" style="left:938px;top:414px;width:22px;height:21px;background:#fff;border:1px solid #a8a8b0;"></div>
<div class="t" style="transform:scaleX(0.8177);top:445.00px;font-size:11px;line-height:11px;color:#000;left:681px;transform-origin:left center;">Espécie Doc.</div>
<div class="a" style="left:744px;top:440px;width:21px;height:20px;background:#fff;border:1px solid #a8a8b0;"></div>
<div class="a" style="left:825px;top:482px;width:85px;height:19px;background:#e1e1e1;border:1px solid #adadad;"></div>
<div class="t" style="transform:scaleX(0.8173);top:486.50px;font-size:11px;line-height:11px;color:#000;left:851.0px;transform-origin:left center;">Contá<u>b</u>il</div>
<div class="a" style="left:917px;top:482px;width:84px;height:19px;background:#e1e1e1;border:1px solid #adadad;"></div>
<div class="t" style="transform:scaleX(0.8683);top:486.50px;font-size:11px;line-height:11px;color:#000;left:942.0px;transform-origin:left center;"><u>L</u>iquidar</div>
<div class="a" style="left:1009px;top:482px;width:85px;height:19px;background:#e1e1e1;border:1px solid #adadad;"></div>
<div class="t" style="transform:scaleX(0.7868);top:486.50px;font-size:11px;line-height:11px;color:#000;left:1032.5px;transform-origin:left center;"><u>C</u>onfirmar</div>
<div class="a" style="left:3px;top:509px;width:1104px;height:2px;background:#2aa0c0;"></div>
<div class="a" style="left:2px;top:511px;width:1106px;height:1px;background:#303030;"></div>
</body></html>
